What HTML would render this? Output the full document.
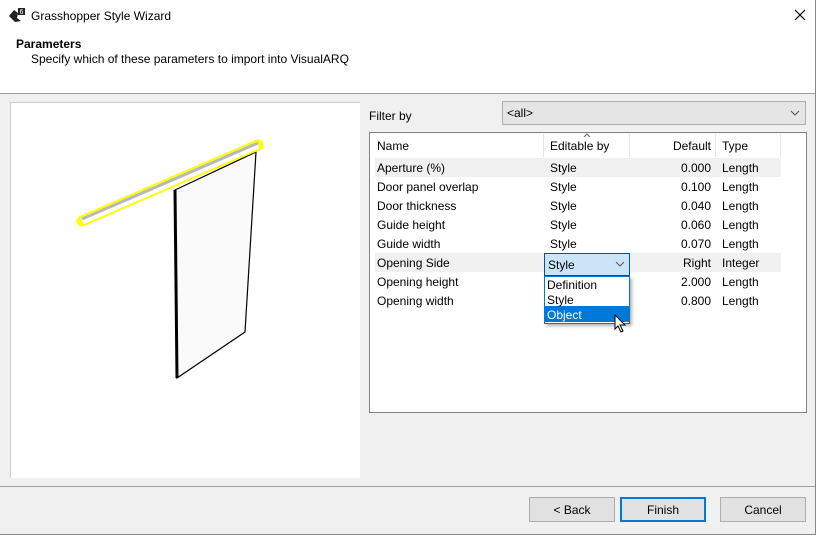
<!DOCTYPE html><html><head><style>
body{margin:0;width:816px;height:535px;background:#f0f0f0;font-family:"Liberation Sans",sans-serif;font-size:12px;color:#000;position:relative;overflow:hidden}
.a{position:absolute}
.t{position:absolute;white-space:nowrap;line-height:19px}
.btn{position:absolute;top:497px;width:84px;height:23px;border:1px solid #adadad;background:#e1e1e1;text-align:center;line-height:24px}
</style></head><body>
<div class="a" style="left:0;top:0;width:815px;height:93px;background:#fff;border-bottom:1px solid #a0a0a0"></div>
<div class="a" style="left:815px;top:0;width:1px;height:535px;background:#888"></div>
<div class="a" style="left:0;top:534px;width:816px;height:1px;background:#888"></div>
<svg class="a" style="left:8px;top:7px" width="18" height="18"><path d="M1 9 L6 3 L10 6 L9 11 L13 14 L7 15 Z" fill="#222"/><rect x="10" y="1" width="7" height="7" fill="#222"/><text x="11.5" y="7" font-size="7" fill="#fff" font-family="Liberation Sans">6</text></svg>
<div class="t" style="left:31px;top:7px">Grasshopper Style Wizard</div>
<svg class="a" style="left:794px;top:9px" width="12" height="12"><path d="M1 1 L11 11 M11 1 L1 11" stroke="#000" stroke-width="1.2"/></svg>
<div class="t" style="left:16px;top:35px;font-weight:bold">Parameters</div>
<div class="t" style="left:31px;top:50px">Specify which of these parameters to import into VisualARQ</div>
<div class="a" style="left:10px;top:102px;width:349px;height:375px;background:#fff;border:1px solid #ccc;border-bottom:none;border-right:none"></div>
<svg class="a" style="left:10px;top:102px" width="350" height="375">
<polygon points="165,88 246,50 235,230 167,276" fill="#fafafa" stroke="#000" stroke-width="1.2"/>
<line x1="165" y1="88" x2="167" y2="276" stroke="#000" stroke-width="3"/>
<line x1="72" y1="119" x2="248" y2="43" stroke="#ffff00" stroke-width="11" stroke-linecap="round"/>
<line x1="72" y1="119" x2="248" y2="43" stroke="#fff" stroke-width="7"/>
<line x1="72" y1="117" x2="248" y2="41" stroke="#b8b8b8" stroke-width="3"/>
</svg>
<div class="t" style="left:369px;top:107px">Filter by</div>
<div class="a" style="left:502px;top:101px;width:302px;height:22px;background:#e5e5e5;border:1px solid #adadad"></div>
<div class="t" style="left:507px;top:104px">&lt;all&gt;</div>
<svg class="a" style="left:790px;top:109px" width="10" height="8"><path d="M1 2 L5 6 L9 2" fill="none" stroke="#555"/></svg>
<div class="a" style="left:369px;top:132px;width:436px;height:279px;background:#fff;border:1px solid #828282"></div>
<div class="a" style="left:543px;top:134px;width:1px;height:23px;background:#e5e5e5"></div>
<div class="a" style="left:629px;top:134px;width:1px;height:23px;background:#e5e5e5"></div>
<div class="a" style="left:715px;top:134px;width:1px;height:23px;background:#e5e5e5"></div>
<div class="a" style="left:780px;top:134px;width:1px;height:23px;background:#e5e5e5"></div>
<svg class="a" style="left:583px;top:133px" width="8" height="5"><path d="M1 4 L4 1 L7 4" fill="none" stroke="#666"/></svg>
<div class="t" style="left:377px;top:137px">Name</div><div class="t" style="left:550px;top:137px">Editable by</div><div class="t" style="left:630px;top:137px;width:81px;text-align:right">Default</div><div class="t" style="left:722px;top:137px">Type</div>
<div class="a" style="left:375px;top:158px;width:406px;height:19px;background:#f0f0f0"></div>
<div class="a" style="left:375px;top:253px;width:406px;height:19px;background:#f0f0f0"></div>
<div class="t" style="left:377px;top:159px">Aperture (%)</div><div class="t" style="left:550px;top:159px">Style</div><div class="t" style="left:630px;top:159px;width:81px;text-align:right">0.000</div><div class="t" style="left:722px;top:159px">Length</div>
<div class="t" style="left:377px;top:178px">Door panel overlap</div><div class="t" style="left:550px;top:178px">Style</div><div class="t" style="left:630px;top:178px;width:81px;text-align:right">0.100</div><div class="t" style="left:722px;top:178px">Length</div>
<div class="t" style="left:377px;top:197px">Door thickness</div><div class="t" style="left:550px;top:197px">Style</div><div class="t" style="left:630px;top:197px;width:81px;text-align:right">0.040</div><div class="t" style="left:722px;top:197px">Length</div>
<div class="t" style="left:377px;top:216px">Guide height</div><div class="t" style="left:550px;top:216px">Style</div><div class="t" style="left:630px;top:216px;width:81px;text-align:right">0.060</div><div class="t" style="left:722px;top:216px">Length</div>
<div class="t" style="left:377px;top:235px">Guide width</div><div class="t" style="left:550px;top:235px">Style</div><div class="t" style="left:630px;top:235px;width:81px;text-align:right">0.070</div><div class="t" style="left:722px;top:235px">Length</div>
<div class="t" style="left:377px;top:254px">Opening Side</div><div class="t" style="left:630px;top:254px;width:81px;text-align:right">Right</div><div class="t" style="left:722px;top:254px">Integer</div>
<div class="t" style="left:377px;top:273px">Opening height</div><div class="t" style="left:630px;top:273px;width:81px;text-align:right">2.000</div><div class="t" style="left:722px;top:273px">Length</div>
<div class="t" style="left:377px;top:292px">Opening width</div><div class="t" style="left:630px;top:292px;width:81px;text-align:right">0.800</div><div class="t" style="left:722px;top:292px">Length</div>
<div class="a" style="left:544px;top:253px;width:84px;height:21px;background:#cce4f7;border:1px solid #005499"></div>
<div class="t" style="left:548px;top:256px">Style</div>
<svg class="a" style="left:615px;top:260px" width="10" height="8"><path d="M1 2 L5 6 L9 2" fill="none" stroke="#555"/></svg>
<div class="a" style="left:544px;top:276px;width:84px;height:46px;background:#fff;border:1px solid #0078d7;box-shadow:2px 2px 3px rgba(0,0,0,.3)"></div>
<div class="a" style="left:545px;top:306px;width:84px;height:16px;background:#0078d7"></div>
<div class="t" style="left:547px;top:276px">Definition</div><div class="t" style="left:547px;top:291px">Style</div><div class="t" style="left:547px;top:306px;color:#fff">Object</div>
<svg class="a" style="left:614px;top:314px" width="14" height="20"><path d="M1 1 L1 15 L4 12 L7 18 L9 17 L6 11 L11 11 Z" fill="#fff" stroke="#000"/></svg>
<div class="a" style="left:0;top:486px;width:815px;height:1px;background:#a0a0a0"></div>
<div class="btn" style="left:529px">&lt; Back</div>
<div class="btn" style="left:620px;border:2px solid #0078d7;width:82px;height:21px;line-height:22px">Finish</div>
<div class="btn" style="left:720px">Cancel</div>
</body></html>
